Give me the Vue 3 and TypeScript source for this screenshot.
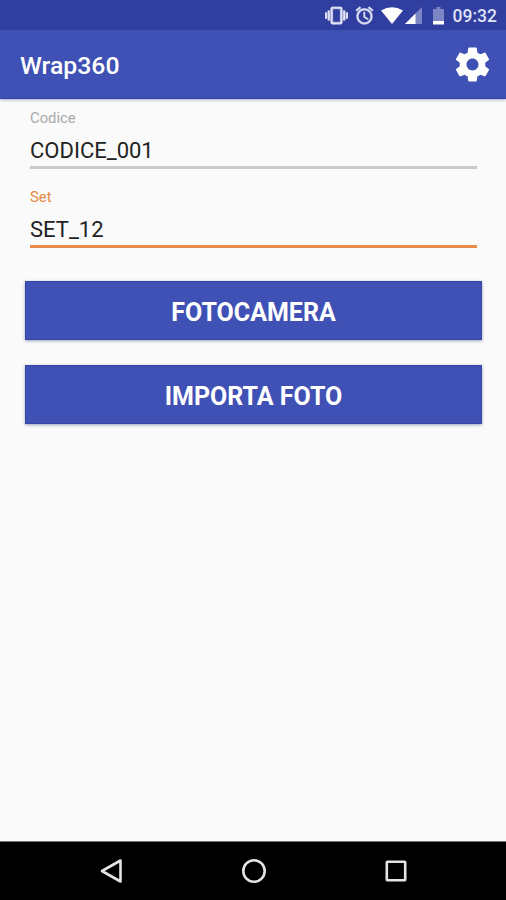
<script setup lang="ts">
import { ref } from 'vue'

interface Field {
  id: string
  label: string
  value: string
}

const fields = ref<Field[]>([
  { id: 'codice', label: 'Codice', value: 'CODICE_001' },
  { id: 'set', label: 'Set', value: 'SET_12' },
])
const activeField = ref('set')
const actions: string[] = ['FOTOCAMERA', 'IMPORTA FOTO']
</script>

<template>
  <div class="screen">
    <div class="status-bar">
      <svg class="vibrate" viewBox="0 0 24 24"><path d="M0 15h2V9H0v6zm3 2h2V7H3v10zm19-8v6h2V9h-2zm-3 8h2V7h-2v10zM16.5 3h-9C6.67 3 6 3.67 6 4.500v15c0 .83.67 1.500 1.500 1.500h9c.83 0 1.500-.67 1.500-1.500v-15c0-.83-.67-1.500-1.500-1.500zM16 19H8V5h8v14z" /></svg>
      <svg class="alarm" viewBox="0 0 24 24"><path d="M22 5.72l-4.600-3.860-1.290 1.530 4.600 3.860L22 5.720zM7.880 3.390L6.600 1.860 2 5.710l1.290 1.530 4.590-3.850zM12.500 8H11v6l4.750 2.850.75-1.230-4-2.370V8zM12 4c-4.970 0-9 4.030-9 9s4.020 9 9 9c4.970 0 9-4.030 9-9s-4.030-9-9-9zm0 16c-3.870 0-7-3.130-7-7s3.130-7 7-7 7 3.130 7 7-3.130 7-7 7z" /></svg>
      <svg class="wifi" viewBox="0 0 22 17"><path d="M0 3.500Q11-3.200 22 3.500L11 17z" /></svg>
      <svg class="signal" viewBox="0 0 17 17"><path class="dim" d="M17 0v17H0z" /><path d="M10.500 6.500V17H0z" /></svg>
      <svg class="battery" viewBox="0 0 11 18"><path class="dim" d="M3.500 0h4v2H11v12H0V2h3.500z" /><path d="M0 14h11v3.500H0z" /></svg>
      <span class="clock">09:32</span>
    </div>

    <header class="app-bar">
      <h1>Wrap360</h1>
      <button class="settings" type="button" aria-label="Impostazioni">
        <svg viewBox="0 0 24 24"><path d="M19.43 12.98c.04-.32.07-.64.07-.98s-.03-.66-.07-.98l2.11-1.65c.19-.15.24-.42.12-.64l-2-3.46c-.12-.22-.39-.3-.61-.22l-2.49 1c-.52-.4-1.08-.73-1.69-.98l-.38-2.65C14.46 2.18 14.25 2 14 2h-4c-.25 0-.46.18-.49.42l-.38 2.65c-.61.25-1.17.59-1.69.98l-2.49-1c-.23-.09-.49 0-.61.22l-2 3.46c-.13.22-.07.49.12.64l2.11 1.65c-.04.32-.07.65-.07.98s.03.66.07.98l-2.11 1.65c-.19.15-.24.42-.12.64l2 3.46c.12.22.39.3.61.22l2.49-1c.52.4 1.08.73 1.69.98l.38 2.65c.03.24.24.42.49.42h4c.25 0 .46-.18.49-.42l.38-2.65c.61-.25 1.17-.59 1.69-.98l2.49 1c.23.09.49 0 .61-.22l2-3.46c.12-.22.07-.49-.12-.64l-2.11-1.65zM12 15.500c-1.930 0-3.500-1.570-3.500-3.500s1.570-3.500 3.500-3.500 3.500 1.570 3.500 3.500-1.570 3.500-3.500 3.500z" /></svg>
      </button>
    </header>

    <main class="content">
      <label v-for="field in fields" :key="field.id" class="field" :class="{ active: field.id === activeField }">
        <span class="field-label">{{ field.label }}</span>
        <input v-model="field.value" type="text" spellcheck="false" @focus="activeField = field.id" />
      </label>
      <div class="actions">
        <button v-for="action in actions" :key="action" type="button">{{ action }}</button>
      </div>
    </main>

    <nav class="nav-bar">
      <svg viewBox="0 0 26 26"><path d="M22.500 2.500v21L4 13z" /></svg>
      <svg viewBox="0 0 26 26"><circle cx="13" cy="13" r="10.700" /></svg>
      <svg viewBox="0 0 26 26"><rect x="3.800" y="3.800" width="18.400" height="18.400" rx=".5" /></svg>
    </nav>
  </div>
</template>

<style>
body {
  margin: 0;
  background: #fafafa;
}
</style>

<style scoped>
.screen {
  display: flex;
  flex-direction: column;
  height: 900px;
  background: #fafafa;
  font-family: Roboto, "Liberation Sans", sans-serif;
}
.status-bar {
  display: flex;
  align-items: center;
  justify-content: flex-end;
  box-sizing: border-box;
  height: 30px;
  padding: 1px 9px 0 0;
  background: #303f9f;
  color: #dfe2f5;
}
.status-bar svg {
  flex: none;
  fill: #dfe2f5;
}
.status-bar .vibrate,
.status-bar .alarm {
  stroke: #dfe2f5;
  stroke-width: 0.6;
}
.vibrate {
  width: 23px;
  height: 23px;
  margin-right: 6px;
}
.alarm {
  width: 21px;
  height: 21px;
  margin-right: 6px;
}
.status-bar .wifi {
  width: 22px;
  height: 17px;
  margin-right: 2px;
  fill: #fff;
}
.status-bar .signal {
  width: 17px;
  height: 17px;
  margin-right: 11px;
  fill: #fff;
}
.status-bar .battery {
  width: 11px;
  height: 18px;
  margin-right: 8.5px;
  fill: #fff;
}
.status-bar .dim {
  fill: #7c86c4;
}
.clock {
  font-size: 17.5px;
  font-weight: 500;
  line-height: 30px;
}
.app-bar {
  display: flex;
  align-items: center;
  justify-content: space-between;
  box-sizing: border-box;
  height: 69px;
  padding: 0 13px 0 20px;
  background: #3f51b5;
  box-shadow: inset 0 -1px #3343a5, 0 1px 3px rgba(40, 60, 130, 0.4);
  color: #fff;
}
h1 {
  margin: 2px 0 0;
  font-size: 24.8px;
  font-weight: 500;
  line-height: 30px;
}
.settings {
  width: 42px;
  height: 42px;
  padding: 0;
  border: 0;
  background: none;
}
.settings svg {
  display: block;
  width: 41px;
  height: 41px;
  margin-left: 0.5px;
  fill: #fff;
}
.content {
  flex: 1;
  padding: 9px 24px 0 25px;
}
.field {
  display: block;
  height: 79px;
  padding: 0 5px;
}
.field-label {
  display: block;
  height: 20px;
  color: #a9a9a9;
  font-size: 14.8px;
  line-height: 20px;
}
.field input {
  display: block;
  box-sizing: border-box;
  width: 100%;
  height: 41px;
  margin: 0;
  padding: 10px 0 4px;
  border: 0;
  border-bottom: 3px solid #c9c9c9;
  border-radius: 0;
  outline: 0;
  background: none;
  color: #222;
  font: 22px/24px Roboto, "Liberation Sans", sans-serif;
}
.active .field-label {
  color: #e5883f;
}
.field.active input {
  border-bottom-color: #e78a4a;
}
.actions {
  display: flex;
  flex-direction: column;
  gap: 25px;
  padding-top: 15px;
}
.actions button {
  height: 59px;
  padding: 4px 0 0;
  border: 0;
  background: #3f51b5;
  box-shadow: inset 0 0 0 1px #3545a8, 0 1px 3px rgba(40, 60, 120, 0.45);
  color: #fff;
  font: 700 25px/30px Roboto, "Liberation Sans", sans-serif;
}
.nav-bar {
  display: flex;
  align-items: center;
  justify-content: space-between;
  box-sizing: border-box;
  height: 59px;
  padding: 0 97px 0 98px;
  border-top: 1px solid #777;
  background: #000;
}
.nav-bar svg {
  width: 26px;
  height: 26px;
  fill: none;
  stroke: #e4e4e4;
  stroke-width: 2.6;
  stroke-linejoin: round;
}
</style>
